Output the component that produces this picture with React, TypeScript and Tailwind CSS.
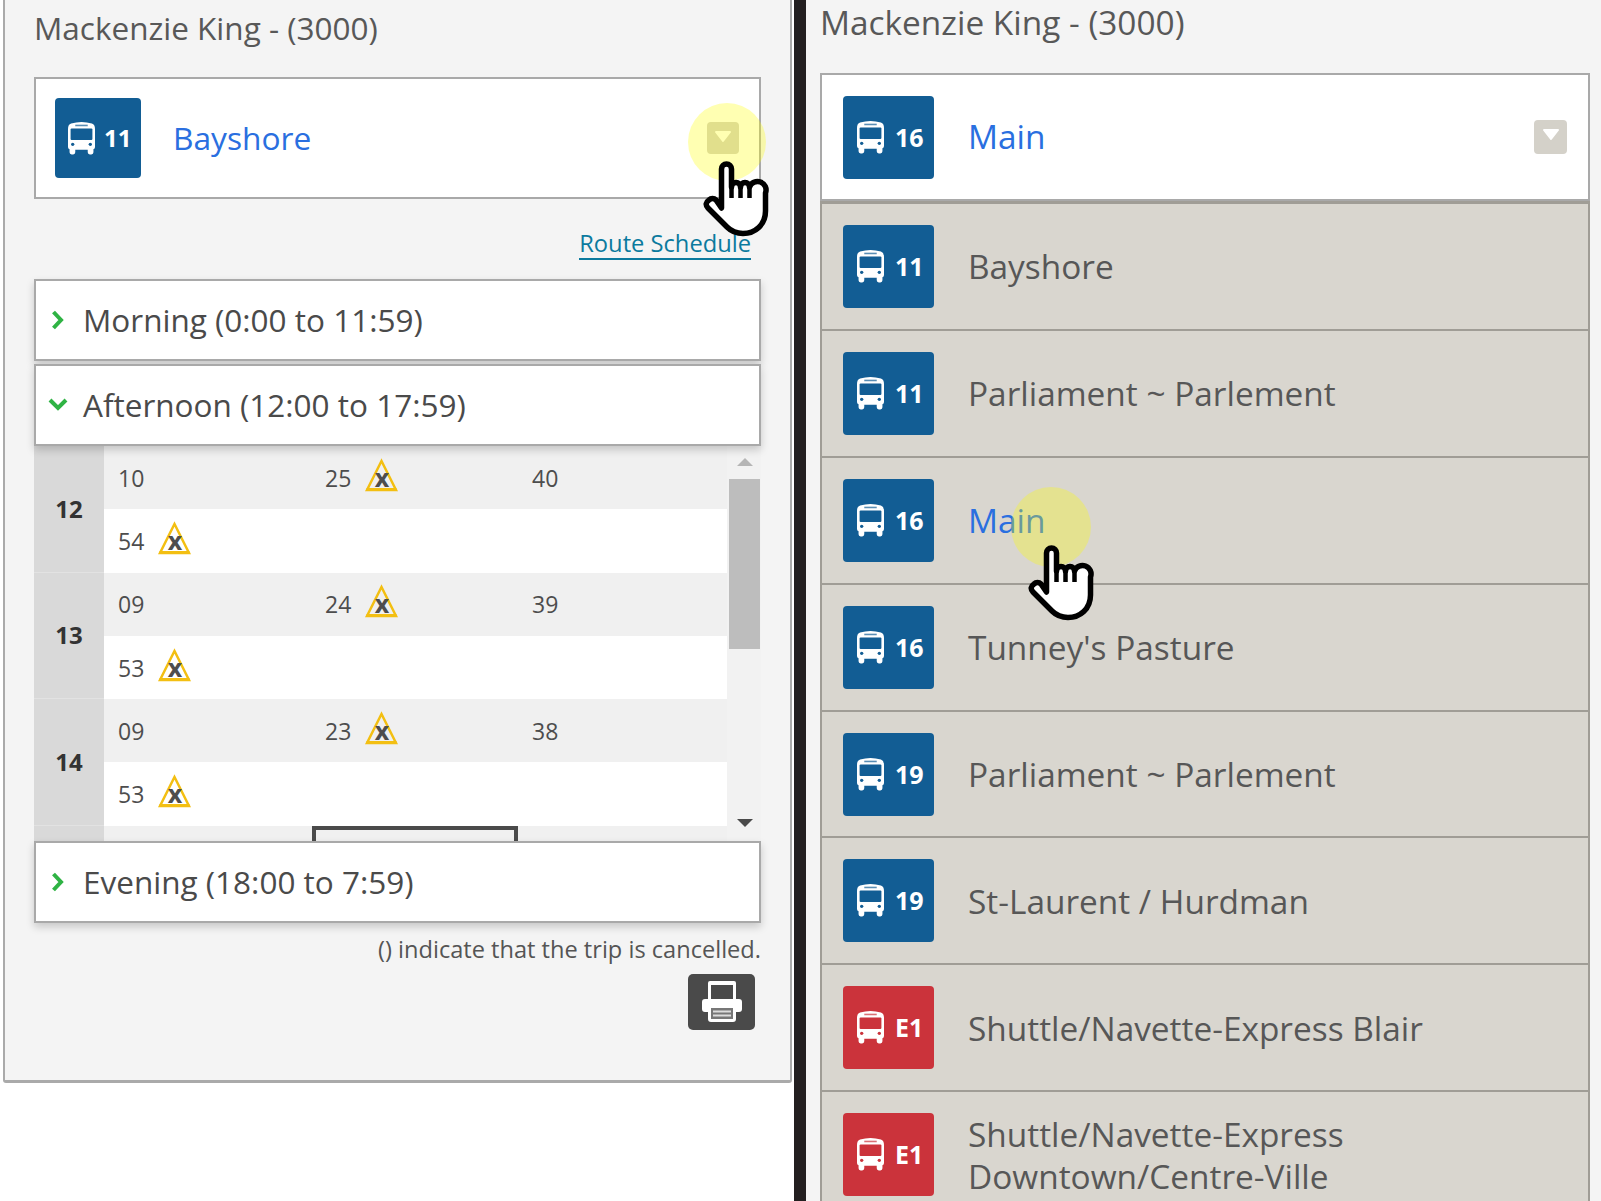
import React from "react";

function Bus({ color, w, h }: { color: string; w: number; h: number }) {
  return (
    <svg width={w} height={h} viewBox="1 0.5 26 31" className="shrink-0" preserveAspectRatio="none">
      <path fill="#fff" d="M4 2Q14-1 24 2Q27 3 27 7V24Q27 26 25.500 26V29Q25.500 31 23.500 31H22Q20 31 20 29V26.500H8V29Q8 31 6 31H4.500Q2.500 31 2.500 29V26Q1 26 1 24V7Q1 3 4 2Z" />
      <rect x="3.500" y="6.500" width="21" height="11" rx="1" fill={color} />
      <rect x="8" y="3" width="12" height="1.500" fill={color} opacity="0.7" />
      <circle cx="5.500" cy="21.500" r="1.600" fill={color} />
      <circle cx="22.500" cy="21.500" r="1.600" fill={color} />
    </svg>
  );
}

function Badge({ n, red, small }: { n: string; red?: boolean; small?: boolean }) {
  const color = red ? "#cb333b" : "#125d94";
  return (
    <div
      className={
        "flex items-center rounded-[4px] shrink-0 " +
        (small ? "w-[86px] h-[80px] pl-[13px] gap-[9px] " : "w-[91px] h-[83px] pl-[14px] gap-[11px] ") +
        (red ? "bg-[#cb333b]" : "bg-[#125d94]")
      }
    >
      <Bus color={color} w={27} h={33} />
      <span className={"font-bold text-white leading-none " + (small ? "text-[24px]" : "text-[25px]")}>{n}</span>
    </div>
  );
}

function Caret({ className }: { className: string }) {
  return (
    <div className={"flex items-start justify-center pt-[9px] rounded-[4px] bg-[#d4d1c9] " + className}>
      <svg width="18" height="12" viewBox="0 0 18 12">
        <path d="M2 1H16L9 10Z" fill="#fff" stroke="#fff" strokeWidth="2" strokeLinejoin="round" />
      </svg>
    </div>
  );
}

function Chevron({ down }: { down?: boolean }) {
  return (
    <svg width="20" height="20" viewBox="0 0 20 20" className="shrink-0">
      <path
        d={down ? "M2 5L10 13L18 5" : "M4.500 2L12 10L4.500 18"}
        fill="none"
        stroke="#2fb344"
        strokeWidth="4"
      />
    </svg>
  );
}

function Accordion({ label, down, h }: { label: string; down?: boolean; h: string }) {
  return (
    <div
      className={
        "flex items-center bg-white border-2 border-[#a9a9a9] shadow-[0_4px_8px_rgba(0,0,0,0.18)] relative text-[31.500px] text-[#4a4a4a] " +
        (down ? "pl-[12px] gap-[15px] " : "pl-[13px] gap-[14px] ") +
        h
      }
    >
      <Chevron down={down} />
      <span className="leading-none">{label}</span>
    </div>
  );
}

function Warn() {
  return (
    <svg width="33" height="34" viewBox="0 0 33 34" className="shrink-0 overflow-visible -mt-[4px]">
      <path d="M16.500 2L31 31H2Z" fill="none" stroke="#f3bf12" strokeWidth="2.500" />
      <path d="M1.500 30.500H31.500" stroke="#f3bf12" strokeWidth="3" />
      <text x="17" y="28" textAnchor="middle" fontSize="25" fontWeight="700" fill="#4d4d4d" fontFamily="'Open Sans', sans-serif">
        x
      </text>
    </svg>
  );
}

function Cell({ v, warn }: { v: string; warn?: boolean }) {
  return (
    <div className="w-[207px] flex items-center gap-[14px] pl-[14px]">
      <span className="leading-none pt-[1px]">{v}</span>
      {warn && <Warn />}
    </div>
  );
}

function Hour({ hour, rows }: { hour: string; rows: { v: string; w?: boolean }[][] }) {
  return (
    <div className="flex">
      <div className="w-[70px] shrink-0 bg-[#d9d9d9] border-b border-[#e2e2e2] flex items-center justify-center font-bold text-[24px] text-[#333]">
        {hour}
      </div>
      <div className="flex-1">
        {rows.map((r, i) => (
          <div key={i} className={"flex h-[63.300px] text-[23px] text-[#4d4d4d] " + (i % 2 === 0 ? "bg-[#f0f0f0]" : "bg-white")}>
            {r.map((c, j) => (
              <Cell key={j} v={c.v} warn={c.w} />
            ))}
          </div>
        ))}
      </div>
    </div>
  );
}

function Hand({ className }: { className: string }) {
  return (
    <svg width="66" height="76" viewBox="0 0 66 76" className={className}>
      <path
        d="M18.500 47V8A5 5 0 0 1 28.500 8V26A4.500 4.500 0 0 1 37.500 26A4.500 4.500 0 0 1 46.500 26A8 8 0 0 1 62.500 32V50C62.500 64 52 72.500 40 72.500C32 72.500 28 70 24 66L5 47C2 44 3 41 6 39C8 37 11 37 13 39Z"
        fill="#fff"
        stroke="#000"
        strokeWidth="5.500"
        strokeLinejoin="round"
      />
      <path d="M28.500 24V37M37.500 25V37M46.500 25V37" stroke="#000" strokeWidth="4.500" fill="none" />
    </svg>
  );
}

function RouteRow({ n, label, active, red }: { n: string; label: React.ReactNode; active?: boolean; red?: boolean }) {
  return (
    <div className="flex items-center h-[126.900px] shrink-0 bg-[#d9d6cf] border-x-2 border-b-2 border-[#a09d96] pl-[21px] gap-[34px]">
      <Badge n={n} red={red} />
      <span className={"text-[33.400px] leading-[42px] " + (active ? "text-[#2a6fe0]" : "text-[#575757]")}>{label}</span>
    </div>
  );
}

export default function App() {
  return (
    <div className="relative flex w-[1601px] h-[1201px] overflow-hidden bg-white font-['Open_Sans',sans-serif]">
      <div className="w-[794px] shrink-0 pl-[3px] pr-[2px]">
        <div className="h-[1083px] bg-[#f4f4f4] border-x-2 border-b-[3px] border-[#aaa] rounded-b-[3px] pl-[29px] pr-[29px]">
          <div className="h-[77px] pt-[8px] text-[31.500px] leading-[40px] text-[#585858]">Mackenzie King - (3000)</div>
          <div className="flex items-center h-[122px] bg-white border-2 border-[#a9a9a9] pl-[19px] pr-[20px]">
            <Badge n="11" small />
            <span className="ml-[32px] text-[31.700px] text-[#2a6fe0] leading-none">Bayshore</span>
            <Caret className="ml-auto w-[32px] h-[32px]" />
          </div>
          <div className="h-[80px] flex justify-end items-start pr-[10px] pt-[29px]">
            <span className="text-[23.700px] leading-[30px] text-[#0b7a9e] border-b-2 border-[#0b7a9e]">Route Schedule</span>
          </div>
          <Accordion label="Morning (0:00 to 11:59)" h="h-[82px] mb-[3px]" />
          <Accordion label="Afternoon (12:00 to 17:59)" down h="h-[82px]" />
          <div className="flex h-[395px] overflow-hidden">
            <div className="w-[693px] shrink-0">
              <Hour hour="12" rows={[[{ v: "10" }, { v: "25", w: true }, { v: "40" }], [{ v: "54", w: true }]]} />
              <Hour hour="13" rows={[[{ v: "09" }, { v: "24", w: true }, { v: "39" }], [{ v: "53", w: true }]]} />
              <Hour hour="14" rows={[[{ v: "09" }, { v: "23", w: true }, { v: "38" }], [{ v: "53", w: true }]]} />
              <div className="flex h-[20px]">
                <div className="w-[70px] bg-[#d9d9d9]" />
                <div className="flex-1 bg-[#f0f0f0] pl-[208px]">
                  <div className="w-[206px] h-[20px] border-x-[4px] border-t-[4px] border-[#4a4a4a]" />
                </div>
              </div>
            </div>
            <div className="flex-1 flex flex-col items-center bg-[#f2f2f2] pl-[2px] pr-[1px] pt-[12px]">
              <div className="w-0 h-0 border-x-[8px] border-b-[8px] border-x-transparent border-b-[#b5b5b5]" />
              <div className="w-full h-[170px] mt-[13px] bg-[#bdbdbd]" />
              <div className="w-0 h-0 mt-[170px] border-x-[8px] border-t-[8px] border-x-transparent border-t-[#4a4a4a]" />
            </div>
          </div>
          <Accordion label="Evening (18:00 to 7:59)" h="h-[82px]" />
          <div className="pt-[10px] text-right text-[23.600px] leading-[32px] text-[#555]">() indicate that the trip is cancelled.</div>
          <div className="flex justify-end pr-[6px] pt-[9px]">
            <div className="w-[67px] h-[56px] rounded-[5px] bg-[#4a4a4a] flex items-center justify-center">
              <svg width="40" height="42" viewBox="0 0 40 42">
                <path d="M6 2a2 2 0 0 1 2-2h24a2 2 0 0 1 2 2v16h-3V4H9v14H6Z" fill="#fff" />
                <path d="M3 18H37a3 3 0 0 1 3 3V28a3 3 0 0 1-3 3H34V38a3 3 0 0 1-3 3H9a3 3 0 0 1-3-3V31H3a3 3 0 0 1-3-3V21a3 3 0 0 1 3-3Z" fill="#fff" />
                <rect x="9" y="27" width="22" height="11" fill="#777" />
                <rect x="11" y="29.500" width="18" height="2" fill="#ddd" />
                <rect x="11" y="33.500" width="18" height="2" fill="#ddd" />
              </svg>
            </div>
          </div>
        </div>
      </div>
      <div className="w-[12px] shrink-0 bg-[#231f20]" />
      <div className="flex-1 bg-[#f4f4f4] pl-[14px] pr-[11px]">
        <div className="h-[73px] text-[33.400px] leading-[44px] text-[#585858]">Mackenzie King - (3000)</div>
        <div className="flex items-center h-[128px] bg-white border-2 border-[#a9a9a9] pl-[21px] pr-[21px] gap-[34px]">
          <Badge n="16" />
          <span className="text-[33.400px] text-[#2a6fe0] leading-none">Main</span>
          <Caret className="ml-auto w-[33px] h-[34px]" />
        </div>
        <div className="flex flex-col h-[1000px] border-t-[3px] border-[#a09d96]">
          <RouteRow n="11" label="Bayshore" />
          <RouteRow n="11" label="Parliament ~ Parlement" />
          <RouteRow n="16" label="Main" active />
          <RouteRow n="16" label="Tunney's Pasture" />
          <RouteRow n="19" label="Parliament ~ Parlement" />
          <RouteRow n="19" label="St-Laurent / Hurdman" />
          <RouteRow n="E1" label="Shuttle/Navette-Express Blair" red />
          <RouteRow n="E1" label={<>Shuttle/Navette-Express<br />Downtown/Centre-Ville</>} red />
        </div>
      </div>
      <div className="absolute left-[688px] top-[103px] w-[78px] h-[78px] rounded-full bg-[#ffff00]/30" />
      <div className="absolute left-[1011px] top-[487px] w-[80px] h-[80px] rounded-full bg-[#ffff00]/30" />
      <Hand className="absolute left-[703px] top-[161px]" />
      <Hand className="absolute left-[1028px] top-[545px]" />
    </div>
  );
}
